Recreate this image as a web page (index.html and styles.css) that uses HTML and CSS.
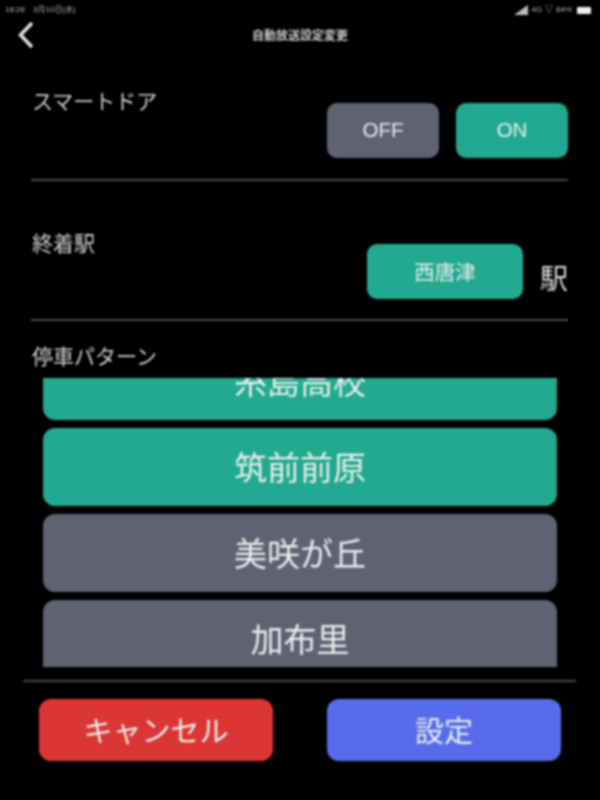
FILE: index.html
```html
<!DOCTYPE html>
<html lang="ja">
<head>
<meta charset="utf-8">
<title>自動放送設定変更</title>
<link rel="stylesheet" href="styles.css">
</head>
<body>
<div class="screen">
  <div class="status">
    <div class="status-left"><span>18:26</span><span>3月10日(水)</span></div>
    <div class="status-right">
      <svg class="signal" viewBox="0 0 14 10" aria-hidden="true"><path d="M0 10 L14 0 V10 Z" fill="#bbb"/></svg>
      <span>4G</span><span>▽</span><span>84%</span>
      <span class="battery"></span>
    </div>
  </div>
  <header class="nav">
    <svg class="back" viewBox="0 0 18 30" aria-hidden="true"><path d="M15 3 L3.500 15 L15 27" fill="none" stroke="#e6e6e6" stroke-width="3.400"/></svg>
    <div class="title">自動放送設定変更</div>
  </header>
  <section class="row row-door">
    <div class="label">スマートドア</div>
    <div class="controls">
      <div class="btn btn-sm grey">OFF</div>
      <div class="btn btn-sm green">ON</div>
    </div>
  </section>
  <hr class="rule">
  <section class="row row-end">
    <div class="label">終着駅</div>
    <div class="controls">
      <div class="btn btn-station green">西唐津</div>
      <span class="eki">駅</span>
    </div>
  </section>
  <hr class="rule">
  <div class="label label-stop">停車パターン</div>
  <div class="list">
    <div class="list-inner">
      <div class="item green">糸島高校</div>
      <div class="item green">筑前前原</div>
      <div class="item grey">美咲が丘</div>
      <div class="item grey">加布里</div>
    </div>
  </div>
  <hr class="rule rule-foot">
  <footer class="foot">
    <div class="btn btn-lg red">キャンセル</div>
    <div class="btn btn-lg blue">設定</div>
  </footer>
</div>
</body>
</html>
```
FILE: styles.css
```css
* { box-sizing: border-box; }
html, body { margin: 0; background: #000; }
body { width: 600px; height: 800px; overflow: hidden; font-family: "Liberation Sans", "Noto Sans CJK JP", sans-serif; color: #e4e4e4; }
.screen { width: 600px; height: 800px; background: #000; overflow: hidden; filter: blur(0.9px); display: flex; flex-direction: column; }

.status { height: 17px; padding: 4px 9px 0 5px; display: flex; justify-content: space-between; align-items: flex-start; font-size: 8px; line-height: 12px; color: #b5b5b5; }
.status-left { display: flex; gap: 8px; }
.status-right { display: flex; gap: 3px; align-items: center; }
.signal { width: 14px; height: 10px; }
.battery { width: 14px; height: 7px; background: #eee; border-radius: 1px; margin-left: 2px; }

.nav { height: 35px; position: relative; display: flex; align-items: center; justify-content: center; }
.back { position: absolute; left: 17px; top: 3px; width: 18px; height: 30px; }
.title { font-size: 12px; font-weight: 700; color: #cfcfcf; }

.row { display: flex; justify-content: space-between; padding: 0 32px; }
.row-door { height: 127px; padding-top: 51px; }
.row-end { height: 138px; padding-top: 63px; }
.label { font-size: 21px; line-height: 28px; color: #cfcfcf; }
.row .label { margin-top: -15px; }
.row-end .label { margin-top: -14px; }
.controls { display: flex; gap: 17px; align-items: flex-start; }

.btn { display: flex; align-items: center; justify-content: center; border-radius: 10px; color: #e6efec; padding-bottom: 2px; }
.btn-sm { width: 112px; height: 55px; font-size: 20.500px; }
.btn-station { width: 156px; height: 55px; font-size: 20.500px; }
.eki { font-size: 28px; line-height: 38px; margin-top: 17px; color: #ddd; }

.rule { margin: 0 32px 0 31px; border: 0; height: 2px; background: #484848; flex: none; }

.label-stop { margin: 22px 0 0 32px; height: 35px; flex: none; }
.list { margin: 0 43px; height: 289px; overflow: hidden; flex: none; }
.list-inner { margin-top: -36px; display: flex; flex-direction: column; gap: 8px; }
.item { height: 78px; flex: none; border-radius: 12px; display: flex; align-items: center; justify-content: center; font-size: 33px; color: #e8efec; padding-bottom: 2px; }

.rule-foot { margin: 13px 24px 0 23px; }
.foot { display: flex; justify-content: space-between; padding: 17px 39px 0; }
.btn-lg { width: 234px; height: 62px; font-size: 29px; border-radius: 12px; }

.green { background: #22a98f; }
.grey { background: #5f6273; }
.red { background: #dc3535; }
.blue { background: #586ceb; }
```
